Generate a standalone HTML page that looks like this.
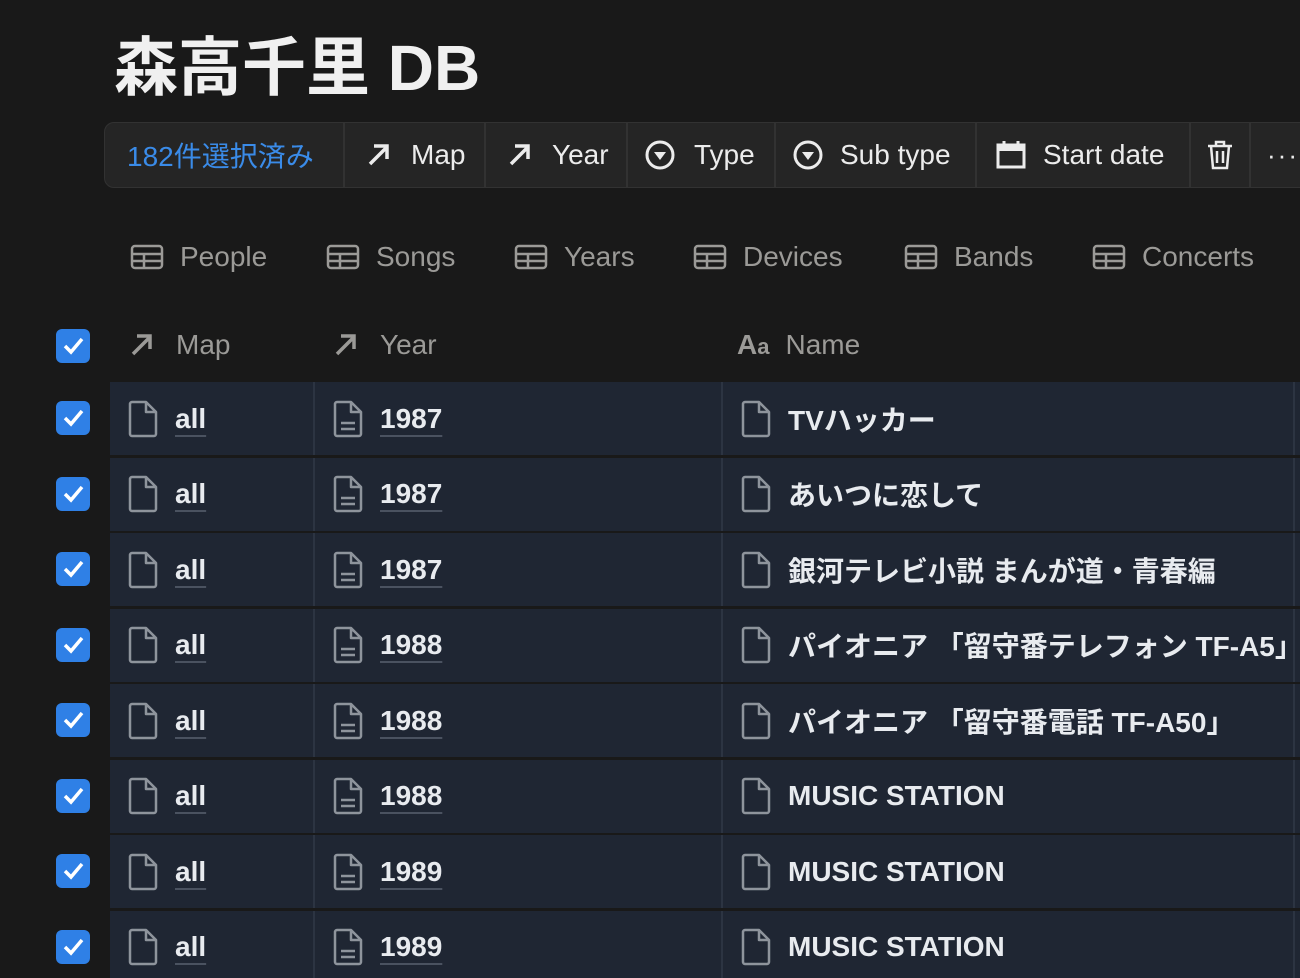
<!DOCTYPE html><html><head><meta charset="utf-8"><style>
html,body{margin:0;width:1300px;height:978px;overflow:hidden}
body{background:#191919;position:relative;font-family:"Liberation Sans","Noto Sans CJK JP",sans-serif;color:#e8ebef}
h1{position:absolute;left:114px;top:17px;margin:0;font-size:64px;font-weight:700;color:#f0f0f0;white-space:nowrap}
.tb{position:absolute;left:104px;top:122px;width:1220px;height:66px;background:#252525;border:1px solid #323232;border-radius:10px;box-sizing:border-box}
.tb .it{position:absolute;top:0;height:64px;display:flex;align-items:center;font-size:28px;color:#ececec;border-right:2px solid #323232;box-sizing:border-box;white-space:nowrap}
.tab{position:absolute;top:241px;display:flex;align-items:center;font-size:28px;color:#9b9a97;white-space:nowrap}
.tab svg{margin-right:16px}
.cb{position:absolute;left:56px;width:34px;height:34px;background:#2f80e6;border-radius:6px}
.row{position:absolute;left:110px;width:1200px;height:73px;background:#1f2633}
.cell{position:absolute;top:0;height:73px;display:flex;align-items:center;font-size:28px;white-space:nowrap;border-right:2px solid #2c3442;box-sizing:border-box;overflow:hidden}
.cell svg{flex-shrink:0}
.u{text-decoration:underline;text-decoration-color:#4a5260;text-underline-offset:7px;text-decoration-thickness:2px;font-weight:700}
.hd{position:absolute;top:329px;display:flex;align-items:center;font-size:28px;color:#9b9a97}
</style></head><body>
<h1>森高千里 DB</h1>
<div class="tb">
<div class="it" style="left:0;width:240px;padding-left:22px;color:#3a8be8">182件選択済み</div>
<div class="it" style="left:240px;width:141px;padding-left:20px"><svg width="28" height="28" viewBox="0 0 28 28"><path d="M5 23L22 6M9 5h13v13" stroke="#ececec" stroke-width="3.5" fill="none"/></svg><span style="margin-left:18px">Map</span></div>
<div class="it" style="left:381px;width:142px;padding-left:20px"><svg width="28" height="28" viewBox="0 0 28 28"><path d="M5 23L22 6M9 5h13v13" stroke="#ececec" stroke-width="3.5" fill="none"/></svg><span style="margin-left:18px">Year</span></div>
<div class="it" style="left:523px;width:148px;padding-left:16px"><svg width="32" height="32" viewBox="0 0 32 32"><circle cx="16" cy="16" r="13" stroke="#ececec" stroke-width="3" fill="none"/><path d="M10 13h12l-6 8z" fill="#ececec"/></svg><span style="margin-left:18px">Type</span></div>
<div class="it" style="left:671px;width:201px;padding-left:16px"><svg width="32" height="32" viewBox="0 0 32 32"><circle cx="16" cy="16" r="13" stroke="#ececec" stroke-width="3" fill="none"/><path d="M10 13h12l-6 8z" fill="#ececec"/></svg><span style="margin-left:16px">Sub type</span></div>
<div class="it" style="left:872px;width:214px;padding-left:18px"><svg width="32" height="32" viewBox="0 0 32 32"><rect x="3" y="6" width="26" height="22" stroke="#ececec" stroke-width="3" fill="none"/><rect x="3" y="6" width="26" height="6" fill="#ececec"/><path d="M9 2v6M23 2v6" stroke="#ececec" stroke-width="3"/></svg><span style="margin-left:16px">Start date</span></div>
<div class="it" style="left:1086px;width:60px;padding-left:14px"><svg width="30" height="32" viewBox="0 0 30 32"><path d="M3 7h24M11 7V3h8v4M6 7l2 22h14l2-22M12 12v12M18 12v12" stroke="#ececec" stroke-width="2.5" fill="none"/></svg></div>
<div class="it" style="left:1146px;width:80px;padding-left:16px;border:none;font-size:26px;letter-spacing:2px">···</div>
</div>
<div class="tab" style="left:130px"><svg width="34" height="26" viewBox="0 0 34 26"><rect x="2" y="2" width="30" height="22" rx="3" stroke="#9b9a97" stroke-width="2.5" fill="none"/><path d="M2 10h30M2 17h30M14 10v14" stroke="#9b9a97" stroke-width="2.5"/></svg>People</div>
<div class="tab" style="left:326px"><svg width="34" height="26" viewBox="0 0 34 26"><rect x="2" y="2" width="30" height="22" rx="3" stroke="#9b9a97" stroke-width="2.5" fill="none"/><path d="M2 10h30M2 17h30M14 10v14" stroke="#9b9a97" stroke-width="2.5"/></svg>Songs</div>
<div class="tab" style="left:514px"><svg width="34" height="26" viewBox="0 0 34 26"><rect x="2" y="2" width="30" height="22" rx="3" stroke="#9b9a97" stroke-width="2.5" fill="none"/><path d="M2 10h30M2 17h30M14 10v14" stroke="#9b9a97" stroke-width="2.5"/></svg>Years</div>
<div class="tab" style="left:693px"><svg width="34" height="26" viewBox="0 0 34 26"><rect x="2" y="2" width="30" height="22" rx="3" stroke="#9b9a97" stroke-width="2.5" fill="none"/><path d="M2 10h30M2 17h30M14 10v14" stroke="#9b9a97" stroke-width="2.5"/></svg>Devices</div>
<div class="tab" style="left:904px"><svg width="34" height="26" viewBox="0 0 34 26"><rect x="2" y="2" width="30" height="22" rx="3" stroke="#9b9a97" stroke-width="2.5" fill="none"/><path d="M2 10h30M2 17h30M14 10v14" stroke="#9b9a97" stroke-width="2.5"/></svg>Bands</div>
<div class="tab" style="left:1092px"><svg width="34" height="26" viewBox="0 0 34 26"><rect x="2" y="2" width="30" height="22" rx="3" stroke="#9b9a97" stroke-width="2.5" fill="none"/><path d="M2 10h30M2 17h30M14 10v14" stroke="#9b9a97" stroke-width="2.5"/></svg>Concerts</div>
<div class="cb" style="top:329px"><svg width="34" height="34"><path d="M9 17l6 6 11-13" stroke="#fff" stroke-width="3.5" fill="none"/></svg></div>
<div class="hd" style="left:128px"><svg width="28" height="28" viewBox="0 0 28 28"><path d="M5 23L22 6M9 5h13v13" stroke="#9b9a97" stroke-width="3.5" fill="none"/></svg><span style="margin-left:20px">Map</span></div>
<div class="hd" style="left:332px"><svg width="28" height="28" viewBox="0 0 28 28"><path d="M5 23L22 6M9 5h13v13" stroke="#9b9a97" stroke-width="3.5" fill="none"/></svg><span style="margin-left:20px">Year</span></div>
<div class="hd" style="left:737px"><span style="font-weight:700;font-size:28px;margin-right:16px">A<span style="font-size:22px">a</span></span>Name</div>
<div id="rows"></div>
<script>
var names=["TVハッカー","あいつに恋して","銀河テレビ小説 まんが道・青春編","パイオニア 「留守番テレフォン TF-A5」","パイオニア 「留守番電話 TF-A50」","MUSIC STATION","MUSIC STATION","MUSIC STATION"];
var years=["1987","1987","1987","1988","1988","1988","1989","1989"];
var page='<svg width="30" height="38" viewBox="0 0 30 38"><path d="M4 2h14l10 10v22a2 2 0 0 1-2 2H4a2 2 0 0 1-2-2V4a2 2 0 0 1 2-2zM18 2v10h10" stroke="#8e949c" stroke-width="2.5" fill="none" stroke-linejoin="round"/>LINES</svg>';
var p1=page.replace("LINES",""),p2=page.replace("LINES",'<path d="M8 23h14M8 29h14" stroke="#8e949c" stroke-width="2.5"/>');
var h="";
for(var i=0;i<8;i++){var t=382+i*75.5;
h+='<div class="cb" style="top:'+(t+19)+'px"><svg width="34" height="34"><path d="M9 17l6 6 11-13" stroke="#fff" stroke-width="3.5" fill="none"/></svg></div>';
h+='<div class="row" style="top:'+t+'px">';
h+='<div class="cell" style="left:0;width:205px;padding-left:18px">'+p1+'<span class="u" style="margin-left:17px">all</span></div>';
h+='<div class="cell" style="left:205px;width:408px;padding-left:18px">'+p2+'<span class="u" style="margin-left:17px">'+years[i]+'</span></div>';
h+='<div class="cell" style="left:613px;width:572px;padding-left:18px">'+p1+'<span style="margin-left:17px;font-weight:700">'+names[i]+'</span></div>';
h+='</div>';}
document.getElementById("rows").innerHTML=h;
</script>
</body></html>
